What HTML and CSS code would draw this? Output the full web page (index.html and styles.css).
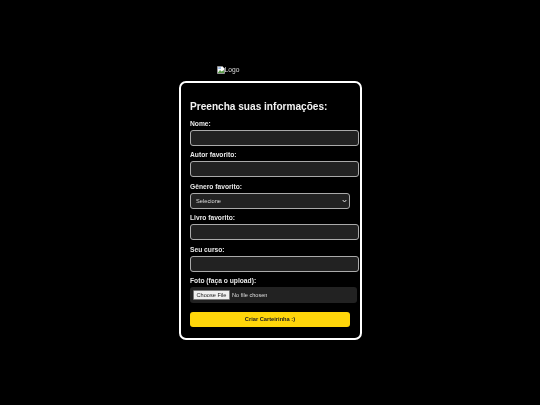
FILE: index.html
```html
<!DOCTYPE html>
<html>

<head>
    <title>Carteirinha</title>
    <link rel="stylesheet" href="styles.css">
</head>

<body>
    <div class="page">
        <div class="logo">
            <svg class="broken" width="8" height="8" viewBox="0 0 8 8">
                <path d="M0.5 0.5H5.5L7.5 2.5V7.5H0.5Z" fill="#fff" stroke="#9a9a9a" stroke-width="0.8" />
                <path d="M1 6.5L3 4L4.5 5.5L7 4V7H1Z" fill="#5a9a4a" />
                <path d="M1.2 1.2H4V3H1.2Z" fill="#9dbbe8" />
            </svg><span>Logo</span>
        </div>

        <form class="card">
            <h2 class="title">Preencha suas informações:</h2>

            <div class="label">Nome:</div>
            <input class="field" type="text">

            <div class="label">Autor favorito:</div>
            <input class="field" type="text">

            <div class="label">Gênero favorito:</div>
            <select class="choice">
                <option>Selecione</option>
            </select>

            <div class="label">Livro favorito:</div>
            <input class="field" type="text">

            <div class="label">Seu curso:</div>
            <input class="field" type="text">

            <div class="label">Foto (faça o upload):</div>
            <div class="upload">
                <span class="file-btn">Choose File</span>
                <span class="file-name">No file chosen</span>
            </div>

            <button class="btn" type="button">Criar Carteirinha :)</button>
        </form>
    </div>
</body>

</html>
```

FILE: styles.css
```css
html,
body {
    margin: 0;
    height: 100%;
    background-color: #000;
    font-family: "Liberation Sans", Arial, sans-serif;
}

/* slight softening, the reference is a scaled down capture */
.page {
    width: 183px;
    margin: 0 auto;
    padding-top: 66px;
    filter: blur(0.3px);
}

.logo {
    display: flex;
    align-items: center;
    height: 8px;
    margin-left: 38px;
    margin-bottom: 7px;
    color: #ddd;
    font-size: 6.7px;
    line-height: 8px;
}

.card {
    box-sizing: border-box;
    height: 258.5px;
    padding: 16.5px 2px 0 9.5px;
    border: 2px solid #fff;
    border-radius: 7px;
}

.title {
    margin: 0 0 5.5px 0;
    color: #f2f2f2;
    font-size: 10.1px;
    line-height: 14px;
    font-weight: bold;
}

.label {
    height: 9px;
    margin-bottom: 2px;
    color: #e8e8e8;
    font-size: 6.7px;
    line-height: 9px;
    font-weight: bold;
}

.field {
    display: block;
    box-sizing: border-box;
    width: 169px;
    height: 16px;
    margin: 0 0 4.4px 0;
    padding: 0;
    border: 1.5px solid #aaa;
    border-radius: 3px;
    outline: 0;
    background-color: #222;
}

.choice {
    display: block;
    box-sizing: border-box;
    width: 160px;
    height: 16px;
    margin: 0 0 4.4px 0;
    padding: 0 5px;
    border: 1.5px solid #aaa;
    border-radius: 3px;
    appearance: none;
    background-color: #222;
    background-image: url("data:image/svg+xml,%3Csvg xmlns='http://www.w3.org/2000/svg' width='5' height='4' viewBox='0 0 5 4'%3E%3Cpath d='M0.7 1L2.5 3L4.3 1' fill='none' stroke='%23ddd' stroke-width='1'/%3E%3C/svg%3E");
    background-repeat: no-repeat;
    background-position: right 2px center;
    color: #ddd;
    font-family: "Liberation Sans", Arial, sans-serif;
    font-size: 5.7px;
}

.upload {
    display: flex;
    align-items: center;
    box-sizing: border-box;
    width: 167px;
    height: 16px;
    padding-left: 3px;
    margin-bottom: 9px;
    border-radius: 3px;
    background-color: #222;
    color: #ddd;
    font-size: 5.6px;
}

.file-btn {
    box-sizing: border-box;
    width: 37px;
    height: 9.5px;
    margin-right: 2px;
    background-color: #efefef;
    border: 0.5px solid #777;
    border-radius: 1px;
    color: #222;
    text-align: center;
    line-height: 8.5px;
}

.btn {
    display: block;
    width: 160px;
    height: 15px;
    padding: 0;
    border: none;
    border-radius: 3px;
    background-color: #ffd60a;
    color: #222;
    font-family: "Liberation Sans", Arial, sans-serif;
    font-size: 5.7px;
    font-weight: bold;
    text-align: center;
}
```
